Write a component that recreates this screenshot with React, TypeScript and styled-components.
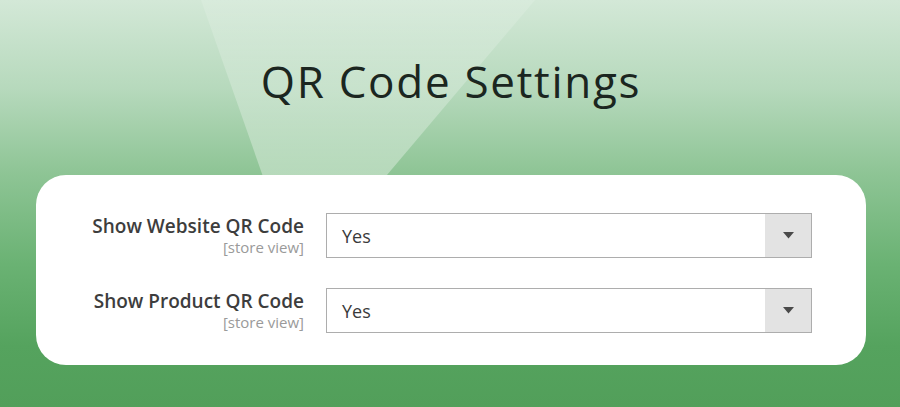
import React from "react";
import styled, { createGlobalStyle } from "styled-components";

const GlobalStyle = createGlobalStyle`
  html, body { margin: 0; padding: 0; }
  body { width: 900px; height: 407px; overflow: hidden; }
`;

const Page = styled.div`
  position: relative;
  width: 900px;
  height: 407px;
  overflow: hidden;
  box-sizing: border-box;
  padding: 0 34px 42px 36px;
  display: flex;
  flex-direction: column;
  background: linear-gradient(180deg, #d3e8d7 0%, #b6d9bc 22%, #8fc596 42%, #6ab273 65%, #55a35e 85%, #529f5a 100%);

  &::before {
    content: "";
    position: absolute;
    inset: 0;
    background: linear-gradient(180deg, rgba(255,255,255,0.12) 0%, rgba(255,255,255,0.36) 43%, rgba(255,255,255,0.5) 70%);
    clip-path: polygon(201px 0, 535px 0, 299px 279px);
  }
`;

const Header = styled.header`
  position: relative;
  height: 175px;
  display: flex;
  align-items: flex-start;
  justify-content: center;
`;

const Title = styled.h1`
  margin: 51px 0 0 0;
  font-family: "Open Sans", "DejaVu Sans", sans-serif;
  font-weight: 400;
  font-size: 44px;
  line-height: 60px;
  letter-spacing: 1.7px;
  color: #1b2620;
`;

const Card = styled.section`
  position: relative;
  flex: 1;
  background: #ffffff;
  border-radius: 30px;
  box-sizing: border-box;
  padding: 38px 54px 0 0;
  display: flex;
  flex-direction: column;
  gap: 30px;
`;

const Row = styled.div`
  display: grid;
  grid-template-columns: 268px 486px;
  column-gap: 22px;
  align-items: start;
`;

const LabelBox = styled.div`
  display: flex;
  flex-direction: column;
  align-items: flex-end;
  padding-top: 2px;
  font-family: "Open Sans", sans-serif;
`;

const LabelText = styled.span`
  font-size: 19px;
  font-weight: 600;
  line-height: 23px;
  color: #3d3d3d;
  white-space: nowrap;
`;

const Scope = styled.span`
  font-size: 15px;
  font-weight: 400;
  line-height: 18px;
  color: #9a9a9a;
  white-space: nowrap;
`;

const Select = styled.div`
  height: 45px;
  box-sizing: border-box;
  border: 1px solid #adadad;
  display: flex;
  align-items: stretch;
  background: #ffffff;
`;

const Value = styled.span`
  flex: 1;
  display: flex;
  align-items: center;
  padding-left: 15px;
  font-family: "Open Sans", sans-serif;
  font-size: 18px;
  color: #3a3a3a;
`;

const Toggle = styled.span`
  width: 46px;
  background: #e3e3e3;
  display: flex;
  align-items: center;
  justify-content: center;
`;

const Arrow = () => (
  <svg width="11" height="7" viewBox="0 0 11 7">
    <path d="M0 0 H11 L5.5 6.5 Z" fill="#4a4a4a" />
  </svg>
);

const fields = [
  { label: "Show Website QR Code", value: "Yes" },
  { label: "Show Product QR Code", value: "Yes" },
];

export default function App() {
  return (
    <>
      <GlobalStyle />
      <Page>
        <Header>
          <Title>QR Code Settings</Title>
        </Header>
        <Card>
          {fields.map((f) => (
            <Row key={f.label}>
              <LabelBox>
                <LabelText>{f.label}</LabelText>
                <Scope>[store view]</Scope>
              </LabelBox>
              <Select>
                <Value>{f.value}</Value>
                <Toggle>
                  <Arrow />
                </Toggle>
              </Select>
            </Row>
          ))}
        </Card>
      </Page>
    </>
  );
}
